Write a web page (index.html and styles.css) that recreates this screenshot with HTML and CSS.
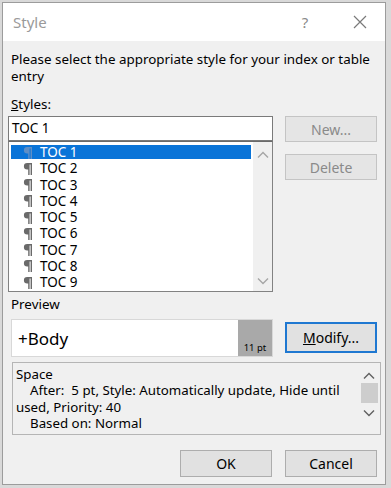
FILE: index.html
```html
<!DOCTYPE html>
<html lang="en">
<head>
    <meta charset="UTF-8">
    <title>Style</title>
    <link rel="stylesheet" href="styles.css">
</head>
<body>
    <div class="dialog">
        <div class="titlebar">
            <div class="title">Style</div>
            <div class="help">?</div>
            <div class="close">
                <svg width="14" height="14" viewBox="0 0 14 14">
                    <path d="M1 1 L13 13 M13 1 L1 13" stroke="#7a7a7a" stroke-width="1.2" fill="none"/>
                </svg>
            </div>
        </div>

        <div class="content">
            <div class="intro">Please select the appropriate style for your index or table entry</div>

            <div class="label styles-label"><u>S</u>tyles:</div>
            <div class="top-row">
                <div class="left-col">
                    <div class="input">TOC 1</div>
                    <div class="listbox">
                        <div class="items">
                            <div class="item selected"><svg class="pilcrow" viewBox="0 0 9 12"><path d="M4.2 0 H9 V12 H7.6 V1.4 H6.6 V12 H5.2 V6.6 H4.2 A3.3 3.3 0 0 1 4.2 0 Z"/></svg>TOC 1</div>
                            <div class="item"><svg class="pilcrow" viewBox="0 0 9 12"><path d="M4.2 0 H9 V12 H7.6 V1.4 H6.6 V12 H5.2 V6.6 H4.2 A3.3 3.3 0 0 1 4.2 0 Z"/></svg>TOC 2</div>
                            <div class="item"><svg class="pilcrow" viewBox="0 0 9 12"><path d="M4.2 0 H9 V12 H7.6 V1.4 H6.6 V12 H5.2 V6.6 H4.2 A3.3 3.3 0 0 1 4.2 0 Z"/></svg>TOC 3</div>
                            <div class="item"><svg class="pilcrow" viewBox="0 0 9 12"><path d="M4.2 0 H9 V12 H7.6 V1.4 H6.6 V12 H5.2 V6.6 H4.2 A3.3 3.3 0 0 1 4.2 0 Z"/></svg>TOC 4</div>
                            <div class="item"><svg class="pilcrow" viewBox="0 0 9 12"><path d="M4.2 0 H9 V12 H7.6 V1.4 H6.6 V12 H5.2 V6.6 H4.2 A3.3 3.3 0 0 1 4.2 0 Z"/></svg>TOC 5</div>
                            <div class="item"><svg class="pilcrow" viewBox="0 0 9 12"><path d="M4.2 0 H9 V12 H7.6 V1.4 H6.6 V12 H5.2 V6.6 H4.2 A3.3 3.3 0 0 1 4.2 0 Z"/></svg>TOC 6</div>
                            <div class="item"><svg class="pilcrow" viewBox="0 0 9 12"><path d="M4.2 0 H9 V12 H7.6 V1.4 H6.6 V12 H5.2 V6.6 H4.2 A3.3 3.3 0 0 1 4.2 0 Z"/></svg>TOC 7</div>
                            <div class="item"><svg class="pilcrow" viewBox="0 0 9 12"><path d="M4.2 0 H9 V12 H7.6 V1.4 H6.6 V12 H5.2 V6.6 H4.2 A3.3 3.3 0 0 1 4.2 0 Z"/></svg>TOC 8</div>
                            <div class="item"><svg class="pilcrow" viewBox="0 0 9 12"><path d="M4.2 0 H9 V12 H7.6 V1.4 H6.6 V12 H5.2 V6.6 H4.2 A3.3 3.3 0 0 1 4.2 0 Z"/></svg>TOC 9</div>
                        </div>
                        <div class="scrollbar list-scroll">
                            <svg class="arrow" width="12" height="8" viewBox="0 0 12 8"><path d="M1 6.5 L6 1.5 L11 6.5" stroke="#a6a6a6" stroke-width="1.4" fill="none"/></svg>
                            <svg class="arrow" width="12" height="8" viewBox="0 0 12 8"><path d="M1 1.5 L6 6.5 L11 1.5" stroke="#a6a6a6" stroke-width="1.4" fill="none"/></svg>
                        </div>
                    </div>
                </div>
                <div class="right-col">
                    <button class="button disabled">New...</button>
                    <button class="button disabled">Delete</button>
                </div>
            </div>

            <div class="label preview-label">Preview</div>
            <div class="preview-row">
                <div class="preview">
                    <div class="preview-text">+Body</div>
                    <div class="preview-size">11 pt</div>
                </div>
                <button class="button default"><u>M</u>odify...</button>
            </div>

            <div class="description">
                <div class="desc-text">
                    <div>Space</div>
                    <div class="indent">After:&nbsp; 5 pt, Style: Automatically update, Hide until</div>
                    <div>used, Priority: 40</div>
                    <div class="indent">Based on: Normal</div>
                </div>
                <div class="scrollbar desc-scroll">
                    <svg class="arrow" width="12" height="8" viewBox="0 0 12 8"><path d="M1 6.5 L6 1.5 L11 6.5" stroke="#606060" stroke-width="1.4" fill="none"/></svg>
                    <div class="thumb"></div>
                    <svg class="arrow" width="12" height="8" viewBox="0 0 12 8"><path d="M1 1.5 L6 6.5 L11 1.5" stroke="#606060" stroke-width="1.4" fill="none"/></svg>
                </div>
            </div>

            <div class="actions">
                <button class="button">OK</button>
                <button class="button">Cancel</button>
            </div>
        </div>
    </div>
</body>
</html>
```

FILE: styles.css
```css
body {
    margin: 0;
    background-color: #d9d9d9;
    font-family: 'Noto Sans', 'Liberation Sans', Arial, sans-serif;
    font-size: 13.4px;
    color: #000;
}

.dialog {
    margin: 2px 5px 0 2px;
    height: 483px;
    border: 1px solid #9c9c9c;
    background-color: #f0f0f0;
    box-sizing: border-box;
}

.titlebar {
    height: 38px;
    background-color: #fff;
    display: flex;
    align-items: center;
}

.title {
    flex: 1;
    padding-left: 10px;
    font-size: 15px;
    color: #9a9a9a;
}

.help {
    width: 20px;
    font-size: 15px;
    color: #8a8a8a;
    text-align: center;
    margin-right: 38px;
}

.close {
    width: 16px;
    margin-right: 16px;
    display: flex;
    align-items: center;
}

.content {
    padding: 0 6px 0 5px;
}

.intro {
    margin-top: 10px;
    line-height: 17px;
    padding-left: 3px;
}

.label {
    line-height: 17px;
    padding-left: 3px;
}

.styles-label {
    margin-top: 11px;
}

.top-row {
    display: flex;
    gap: 12px;
    margin-top: 3px;
}

.left-col {
    width: 265px;
}

.input {
    height: 25px;
    box-sizing: border-box;
    border: 1px solid #7a7a7a;
    background-color: #fff;
    padding: 2px 0 0 3px;
    font-size: 13.5px;
}

.listbox {
    height: 151px;
    box-sizing: border-box;
    border: 1px solid #828282;
    border-top-color: #6a6a6a;
    background-color: #fff;
    display: flex;
}

.items {
    flex: 1;
    padding: 2px 2px 0 2px;
}

.item {
    height: 16.25px;
    box-sizing: border-box;
    padding: 1px 0;
    background-clip: content-box;
    display: flex;
    align-items: center;
    font-size: 13.5px;
    line-height: 14px;
}

.item.selected {
    background-color: #0a74d8;
    color: #fff;
}

.pilcrow {
    width: 9px;
    height: 12px;
    margin: 1px 8px 0 12px;
    fill: #6a6a6a;
}

.item.selected .pilcrow {
    fill: #5e8ec6;
}

.scrollbar {
    width: 19px;
    background-color: #f0f0f0;
    display: flex;
    flex-direction: column;
    align-items: center;
    justify-content: space-between;
}

.list-scroll {
    padding: 9px 0 6px;
}

.right-col {
    display: flex;
    flex-direction: column;
    gap: 12px;
}

.button {
    width: 92px;
    height: 26px;
    background-color: #e1e1e1;
    border: 1px solid #adadad;
    font-family: inherit;
    font-size: 14px;
    color: #000;
    padding: 0;
}

.button.disabled {
    background-color: #e5e5e5;
    border-color: #c4c4c4;
    color: #8a8a8a;
}

.button.default {
    height: 31px;
    border: 2px solid #1f78d1;
    margin-top: 3px;
}

.preview-label {
    margin-top: 4px;
}

.preview-row {
    display: flex;
    align-items: flex-start;
    gap: 12px;
    margin-top: 6px;
}

.preview {
    margin-left: 3px;
    width: 262px;
    height: 38px;
    box-sizing: border-box;
    border: 1px solid #d8d8d8;
    background-color: #fff;
    display: flex;
}

.preview-text {
    flex: 1;
    font-size: 17px;
    padding: 7px 0 0 6px;
}

.preview-size {
    width: 34px;
    background-color: #a9a9a9;
    font-size: 9.5px;
    display: flex;
    align-items: flex-end;
    justify-content: center;
    padding-bottom: 2px;
}

.description {
    margin: 5px 0 0 4px;
    width: 369px;
    height: 73px;
    box-sizing: border-box;
    border: 1px solid #b5b5b5;
    display: flex;
}

.desc-text {
    flex: 1;
    padding: 3px 0 0 3px;
    line-height: 16.3px;
    font-size: 13.3px;
    white-space: nowrap;
}

.indent {
    padding-left: 14px;
}

.desc-scroll {
    margin: 1px 2px 1px 0;
    width: 18px;
    padding: 8px 0 6px;
    justify-content: flex-start;
}

.thumb {
    width: 17px;
    height: 20px;
    background-color: #cdcdcd;
    margin: 3px 0 6px;
}

.actions {
    display: flex;
    justify-content: flex-end;
    gap: 13px;
    margin-top: 15px;
    padding-right: 2px;
}

.actions .button {
    height: 27px;
}
```
